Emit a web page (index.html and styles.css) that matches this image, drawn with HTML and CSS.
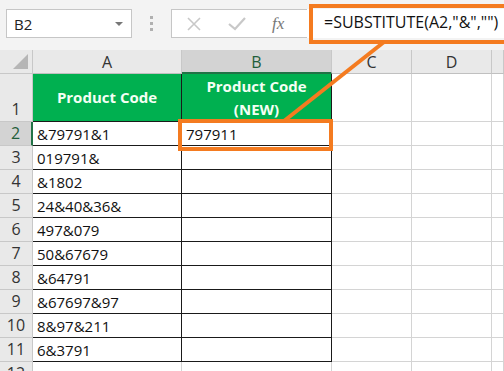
FILE: index.html
```html
<!DOCTYPE html>
<html>
<head>
<meta charset="utf-8">
<link rel="stylesheet" href="styles.css">
</head>
<body>
<div class="app">
  <div class="topbar">
    <div class="namebox">
      <span class="name">B2</span>
      <span class="caret"></span>
    </div>
    <div class="grip"><i></i><i></i><i></i></div>
    <div class="fbtns">
      <svg class="ico" width="20" height="20" viewBox="0 0 20 20"><path d="M4 4 L16 16 M16 4 L4 16" stroke="#c8c8c8" stroke-width="1.6" fill="none"/></svg>
      <svg class="ico" width="22" height="20" viewBox="0 0 22 20"><path d="M3 10 L9 15 L19 4" stroke="#c8c8c8" stroke-width="2.2" fill="none"/></svg>
      <span class="fx">fx</span>
    </div>
    <div class="finput">=SUBSTITUTE(A2,"&amp;","")</div>
  </div>
  <div class="sheet">
    <div class="corner"><span class="tri"></span></div>
    <div class="ch">A</div>
    <div class="ch sel">B</div>
    <div class="ch">C</div>
    <div class="ch">D</div>
    <div class="ch"></div>

    <div class="rh">1</div>
    <div class="c hd">Product Code</div>
    <div class="c hd hd2">Product Code<br>(NEW)</div>
    <div class="c"></div><div class="c"></div><div class="c"></div>

    <div class="rh rsel">2</div>
    <div class="c t">&amp;79791&amp;1</div>
    <div class="c t">797911</div>
    <div class="c"></div><div class="c"></div><div class="c"></div>

    <div class="rh">3</div>
    <div class="c t">019791&amp;</div>
    <div class="c t"></div>
    <div class="c"></div><div class="c"></div><div class="c"></div>

    <div class="rh">4</div>
    <div class="c t">&amp;1802</div>
    <div class="c t"></div>
    <div class="c"></div><div class="c"></div><div class="c"></div>

    <div class="rh">5</div>
    <div class="c t">24&amp;40&amp;36&amp;</div>
    <div class="c t"></div>
    <div class="c"></div><div class="c"></div><div class="c"></div>

    <div class="rh">6</div>
    <div class="c t">497&amp;079</div>
    <div class="c t"></div>
    <div class="c"></div><div class="c"></div><div class="c"></div>

    <div class="rh">7</div>
    <div class="c t">50&amp;67679</div>
    <div class="c t"></div>
    <div class="c"></div><div class="c"></div><div class="c"></div>

    <div class="rh">8</div>
    <div class="c t">&amp;64791</div>
    <div class="c t"></div>
    <div class="c"></div><div class="c"></div><div class="c"></div>

    <div class="rh">9</div>
    <div class="c t">&amp;67697&amp;97</div>
    <div class="c t"></div>
    <div class="c"></div><div class="c"></div><div class="c"></div>

    <div class="rh">10</div>
    <div class="c t">8&amp;97&amp;211</div>
    <div class="c t"></div>
    <div class="c"></div><div class="c"></div><div class="c"></div>

    <div class="rh">11</div>
    <div class="c t">6&amp;3791</div>
    <div class="c t"></div>
    <div class="c"></div><div class="c"></div><div class="c"></div>

    <div class="rh">12</div>
    <div class="c"></div><div class="c"></div>
    <div class="c"></div><div class="c"></div><div class="c"></div>
  </div>

  <div class="hl-formula"></div>
  <div class="hl-cell"></div>
  <svg class="hl-line" width="504" height="371" viewBox="0 0 504 371">
    <line x1="284" y1="121" x2="384" y2="42" stroke="#f47b20" stroke-width="4"/>
  </svg>
</div>
</body>
</html>
```

FILE: styles.css
```css
* { box-sizing: border-box; }
html, body { margin: 0; padding: 0; }
body {
  width: 504px;
  height: 371px;
  overflow: hidden;
  background: #ffffff;
  font-family: "Open Sans", "Noto Sans", sans-serif;
}
.app {
  position: relative;
  width: 504px;
  height: 371px;
  overflow: hidden;
}
.topbar {
  height: 50px;
  background: #f3f3f3;
  display: flex;
  align-items: flex-start;
  padding: 9px 0 0 6px;
}
.namebox {
  width: 126px;
  height: 29px;
  background: #fff;
  border: 1px solid #c6c6c6;
  display: flex;
  align-items: center;
  justify-content: space-between;
  padding: 0 8px 0 7px;
}
.name {
  font-size: 15px;
  color: #222;
}
.caret {
  width: 0; height: 0;
  border-left: 4px solid transparent;
  border-right: 4px solid transparent;
  border-top: 4px solid #777;
}
.grip {
  width: 39px;
  height: 29px;
  display: flex;
  flex-direction: column;
  align-items: center;
  justify-content: center;
  gap: 3px;
}
.grip i {
  width: 3px; height: 3px;
  background: #b0b0b0;
  display: block;
}
.fbtns {
  width: 140px;
  height: 29px;
  background: #fff;
  border: 1px solid #c6c6c6;
  display: flex;
  align-items: center;
  padding-left: 12px;
  gap: 22px;
}
.fx {
  font-family: "Liberation Serif", serif;
  font-style: italic;
  font-size: 17px;
  color: #777;
  margin-left: 2px;
}
.finput {
  flex: 1;
  height: 29px;
  background: #fff;
  margin-left: -4px;
  margin-top: 0;
  font-size: 16px;
  color: #111;
  padding: 2px 0 0 17px;
  white-space: nowrap;
}
.sheet {
  display: grid;
  grid-template-columns: 33px 149px 150px 80px 80px 12px;
  grid-template-rows: 24px 48px repeat(10, 24px) 24px;
}
.corner {
  background: #e9e9e9;
  border-right: 1px solid #c8c8c8;
  border-bottom: 1px solid #c8c8c8;
  position: relative;
}
.tri {
  position: absolute;
  right: 4px;
  bottom: 4px;
  width: 0; height: 0;
  border-left: 15px solid transparent;
  border-bottom: 15px solid #b6b6b6;
}
.ch {
  background: #e9e9e9;
  border-right: 1px solid #c8c8c8;
  border-bottom: 1px solid #c0c0c0;
  font-size: 16px;
  color: #333;
  display: flex;
  align-items: center;
  justify-content: center;
  padding-top: 1px;
}
.ch.sel {
  background: #d3d3d3;
  border-bottom: 2px solid #217346;
  color: #1f5e3a;
}
.rh {
  background: #e9e9e9;
  border-right: 1px solid #c8c8c8;
  border-bottom: 1px solid #c8c8c8;
  font-size: 16px;
  color: #333;
  display: flex;
  align-items: flex-end;
  justify-content: center;
  padding-bottom: 1px;
}
.rh.rsel {
  background: #d3d3d3;
  border-right: 2px solid #217346;
  color: #1f5e3a;
}
.c {
  border-right: 1px solid #d4d4d4;
  border-bottom: 1px solid #d4d4d4;
}
.hd {
  background: #00b050;
  color: #f4fff4;
  font-weight: 700;
  font-size: 15px;
  display: flex;
  align-items: center;
  justify-content: center;
  text-align: center;
  border-right: 1px solid #1a1a1a;
  border-bottom: 1px solid #1a1a1a;
  line-height: 23px;
}
.hd2 { padding-top: 0; }
.t {
  border-right: 1px solid #1a1a1a;
  border-bottom: 1px solid #1a1a1a;
  font-size: 15px;
  color: #111;
  padding-left: 4px;
  display: flex;
  align-items: flex-end;
  padding-bottom: 1px;
  line-height: 20px;
}
.hl-formula {
  position: absolute;
  left: 309px;
  top: 4px;
  width: 200px;
  height: 40px;
  border: 4.5px solid #f47b20;
}
.hl-cell {
  position: absolute;
  left: 178px;
  top: 119px;
  width: 155px;
  height: 32px;
  border: 4.5px solid #f47b20;
}
.hl-line {
  position: absolute;
  left: 0;
  top: 0;
  pointer-events: none;
}
```
